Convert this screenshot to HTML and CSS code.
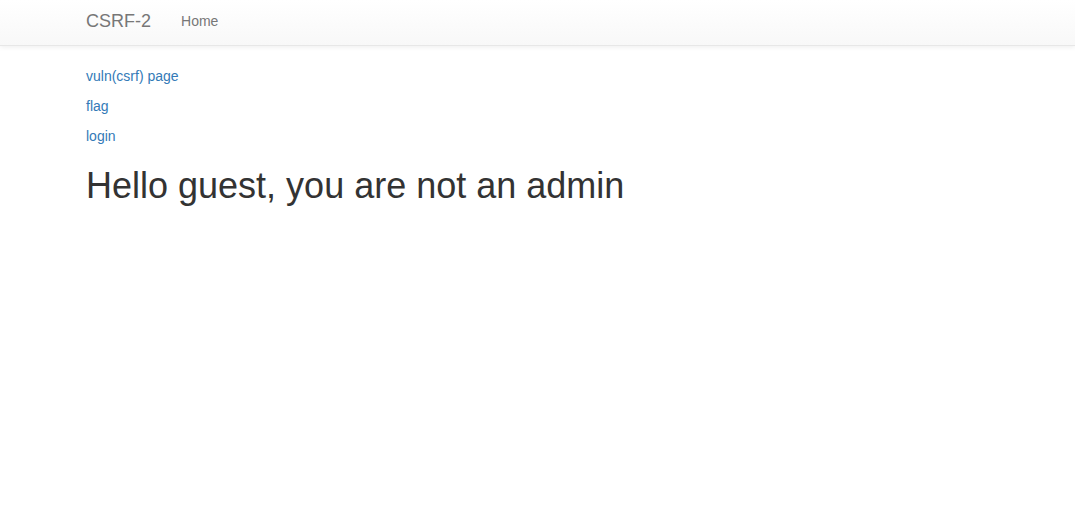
FILE: index.html
```html
<!DOCTYPE html>
<html>
<head>
<meta charset="utf-8">
<title>CSRF-2</title>
<link rel="stylesheet" href="styles.css">
</head>
<body>
<nav class="navbar">
  <div class="container navbar-inner">
    <a class="brand" href="#">CSRF-2</a>
    <a class="nav-link" href="#">Home</a>
  </div>
</nav>
<main class="container content">
  <p><a href="#">vuln(csrf) page</a></p>
  <p><a href="#">flag</a></p>
  <p><a href="#">login</a></p>
  <h1>Hello guest, you are not an admin</h1>
</main>
</body>
</html>
```
FILE: styles.css
```css
* { box-sizing: border-box; }
html, body { margin: 0; padding: 0; }
body {
  font-family: "Liberation Sans", Arial, Helvetica, sans-serif;
  font-size: 14px;
  line-height: 20px;
  color: #333;
  background: #fff;
}
a { color: #337ab7; text-decoration: none; }
.container {
  width: 933px;
  margin: 0 auto;
  padding: 0 15px;
}
.navbar {
  height: 46px;
  background: linear-gradient(to bottom, #ffffff 0, #f8f8f8 100%);
  border-bottom: 1px solid #e7e7e7;
  box-shadow: 0 1px 5px rgba(0, 0, 0, 0.075);
}
.navbar-inner {
  display: flex;
  align-items: center;
  height: 45px;
  padding-top: 0;
  padding-bottom: 3px;
}
.brand {
  font-size: 18px;
  line-height: 20px;
  color: #777;
}
.nav-link {
  margin-left: 30px;
  font-size: 14px;
  line-height: 20px;
  color: #777;
}
.content {
  padding-top: 20px;
}
.content p {
  margin: 0 0 10px;
}
.content h1 {
  margin: 20px 0 10px;
  font-size: 36px;
  font-weight: 500;
  line-height: 1.1;
  color: #333;
}
```
